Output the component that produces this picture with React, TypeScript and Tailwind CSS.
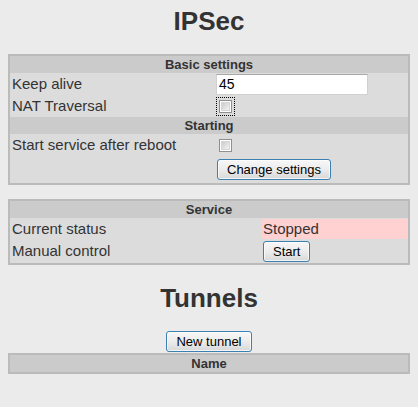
import React from "react";

const font = { fontFamily: '"Liberation Sans", Arial, sans-serif' };

function Btn({ children }: { children: React.ReactNode }) {
  return (
    <button className="h-[21px] px-[9px] border border-[#3c7fb1] rounded-[3px] bg-gradient-to-b from-[#f7f7f7] via-[#ececec] to-[#d8d8d8] shadow-[inset_0_0_0_1px_rgba(255,255,255,0.7)] text-[13px] leading-[15px] text-black">
      {children}
    </button>
  );
}

function Check({ focus }: { focus?: boolean }) {
  return (
    <span className={"inline-flex items-center justify-center w-[19px] h-[19px] " + (focus ? "outline outline-1 outline-dotted outline-black -outline-offset-1" : "")}>
      <span className="block w-[13px] h-[13px] border border-[#8e8f8f] bg-white p-[1px]">
        <span className="block w-full h-full bg-gradient-to-br from-[#cbcbcb] to-[#f4f4f4] border border-[#d6d6d6]" />
      </span>
    </span>
  );
}

function Header({ children }: { children: React.ReactNode }) {
  return (
    <div className="h-[17px] bg-[#cbcbcb] text-center text-[13px] font-bold leading-[17px] text-[#333]">
      {children}
    </div>
  );
}

export default function App() {
  return (
    <div className="min-h-[407px] bg-[#ebebeb] text-[#333] pb-8" style={font}>
      <h1 className="pt-[6px] h-[36px] text-center text-[26px] font-bold leading-[30px]">IPSec</h1>

      <div className="mx-[8px] mt-[18px] border-2 border-[#bbbbbb] bg-[#dcdcdc] text-[15px]">
        <Header>Basic settings</Header>
        <div className="flex h-[22px] items-center">
          <div className="w-[206px] pl-[2px]">Keep alive</div>
          <input
            defaultValue="45"
            className="w-[152px] h-[21px] bg-white border border-[#d0d0d0] border-t-[#a8a8a8] px-[2px] text-[14px] text-black outline-none"
            style={font}
          />
        </div>
        <div className="flex h-[22px] items-center">
          <div className="w-[206px] pl-[2px]">NAT Traversal</div>
          <Check focus />
        </div>
        <Header>Starting</Header>
        <div className="flex h-[22px] items-center">
          <div className="w-[206px] pl-[2px]">Start service after reboot</div>
          <Check />
        </div>
        <div className="flex h-[27px] items-center">
          <div className="w-[207px]" />
          <Btn>Change settings</Btn>
        </div>
      </div>

      <div className="mx-[8px] mt-[14px] border-2 border-[#bbbbbb] bg-[#dcdcdc] text-[15px]">
        <Header>Service</Header>
        <div className="flex h-[22px] items-center">
          <div className="w-[252px] pl-[2px]">Current status</div>
          <div className="flex-1 h-[20px] bg-[#ffd1d1] pl-[1px] leading-[20px]">Stopped</div>
        </div>
        <div className="flex h-[23px] items-center">
          <div className="w-[253px] pl-[2px]">Manual control</div>
          <Btn>Start</Btn>
        </div>
      </div>

      <h1 className="mt-[18px] h-[30px] text-center text-[26px] font-bold leading-[30px]">Tunnels</h1>

      <div className="mt-[18px] flex justify-center">
        <Btn>New tunnel</Btn>
      </div>

      <div className="mx-[8px] mt-[1px] border-2 border-[#bbbbbb] bg-[#dcdcdc]">
        <Header>Name</Header>
      </div>
    </div>
  );
}
